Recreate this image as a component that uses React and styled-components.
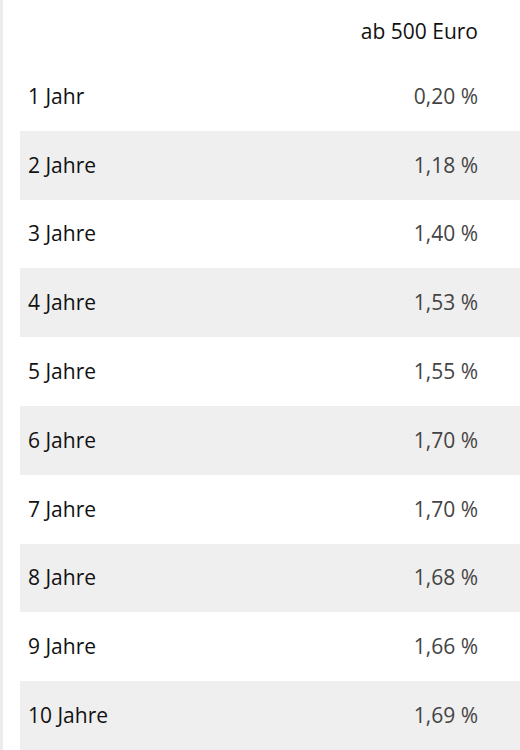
import React from "react";
import styled, { createGlobalStyle } from "styled-components";

const Global = createGlobalStyle`
  html, body { margin: 0; padding: 0; background: #fff; overflow: hidden; }
  body { font-family: "Open Sans", "Liberation Sans", sans-serif; }
`;

const Page = styled.div`
  height: 750px;
  border-left: 3px solid #ececec;
  padding-left: 17px;
  box-sizing: border-box;
`;

const Table = styled.div`
  display: flex;
  flex-direction: column;
  width: 500px;
`;

const Row = styled.div`
  display: flex;
  justify-content: space-between;
  align-items: center;
  height: ${(p) => (p.$header ? "62px" : "68.8px")};
  padding: 0 42px 0 8px;
  background: ${(p) => (p.$shaded ? "#efefef" : "#fff")};
  font-size: 21px;
  line-height: 1;
`;

const Label = styled.span`
  color: #111;
`;

const Value = styled.span`
  color: ${(p) => (p.$header ? "#111" : "#444")};
`;

const rows = [
  ["1 Jahr", "0,20 %"],
  ["2 Jahre", "1,18 %"],
  ["3 Jahre", "1,40 %"],
  ["4 Jahre", "1,53 %"],
  ["5 Jahre", "1,55 %"],
  ["6 Jahre", "1,70 %"],
  ["7 Jahre", "1,70 %"],
  ["8 Jahre", "1,68 %"],
  ["9 Jahre", "1,66 %"],
  ["10 Jahre", "1,69 %"],
];

export default function App() {
  return (
    <Page>
      <Global />
      <Table>
        <Row $header>
          <Label />
          <Value $header>ab 500 Euro</Value>
        </Row>
        {rows.map(([l, v], i) => (
          <Row key={l} $shaded={i % 2 === 1}>
            <Label>{l}</Label>
            <Value>{v}</Value>
          </Row>
        ))}
      </Table>
    </Page>
  );
}
